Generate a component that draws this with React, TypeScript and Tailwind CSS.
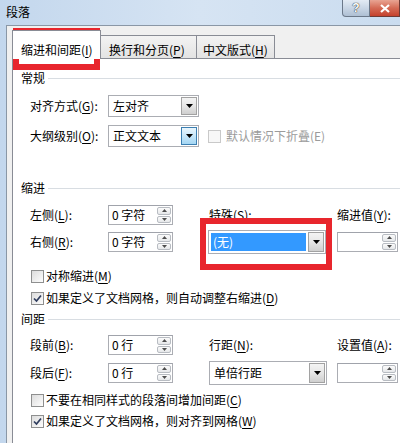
import React from "react";

const U = ({ children }: { children: React.ReactNode }) => (
  <span className="underline decoration-1 underline-offset-[2px]">{children}</span>
);

function Arrow({ up = false, small = false }: { up?: boolean; small?: boolean }) {
  if (small) {
    return (
      <svg width="5" height="3" viewBox="0 0 5 3">
        <path d={up ? "M0 3 L2.5 0 L5 3 Z" : "M0 0 L2.5 3 L5 0 Z"} fill="#4d4d4d" />
      </svg>
    );
  }
  return (
    <svg width="7" height="4" viewBox="0 0 7 4">
      <path d="M0 0 L3.5 4 L7 0 Z" fill="#000" />
    </svg>
  );
}

function Header({ title }: { title: string }) {
  return (
    <div className="h-[16px] flex items-center pl-[8px]">
      <span>{title}</span>
      <div className="flex-1 h-px bg-[#d8dde2] ml-[3px]" />
    </div>
  );
}

function Label({ children, w = "w-[78px]" }: { children: React.ReactNode; w?: string }) {
  return <div className={`${w} shrink-0 whitespace-nowrap`}>{children}</div>;
}

function Spinner({ value, w }: { value?: string; w: string }) {
  return (
    <div className={`${w} h-[20px] shrink-0 flex border border-[#abadb3] border-t-[#a0a3ab] bg-white`}>
      <div className="flex-1 flex items-center pl-[3px] whitespace-nowrap">{value}</div>
      <div className="w-[15px] flex flex-col gap-px py-px pr-px">
        <div className="flex-1 flex items-center justify-center border border-[#b8bcc2] rounded-[2px] bg-linear-to-b from-[#fbfbfb] to-[#e6e8ea]">
          <Arrow up small />
        </div>
        <div className="flex-1 flex items-center justify-center border border-[#b8bcc2] rounded-[2px] bg-linear-to-b from-[#fbfbfb] to-[#e6e8ea]">
          <Arrow small />
        </div>
      </div>
    </div>
  );
}

function Combo({
  text,
  w,
  h = "h-[22px]",
  hot = false,
  selected = false,
}: {
  text: string;
  w: string;
  h?: string;
  hot?: boolean;
  selected?: boolean;
}) {
  return (
    <div className={`${w} ${h} shrink-0 flex border border-[#abadb3] bg-white`}>
      <div className="flex-1 flex items-center p-[2px]">
        {selected ? (
          <div className="h-full w-full flex items-center bg-[#3399ff] text-white pl-[2px]">{text}</div>
        ) : (
          <div className="pl-[2px] whitespace-nowrap">{text}</div>
        )}
      </div>
      <div
        className={`w-[16px] my-px mr-px flex items-center justify-center border ${
          hot
            ? "border-[#3c7fb1] bg-linear-to-b from-[#eaf6fd] via-[#c7e7fa] to-[#a4d6f3]"
            : "border-[#a2a2a2] bg-linear-to-b from-[#f4f4f4] via-[#e6e6e6] to-[#cfcfcf]"
        }`}
      >
        <Arrow />
      </div>
    </div>
  );
}

function Check({ checked = false, disabled = false }: { checked?: boolean; disabled?: boolean }) {
  return (
    <div
      className={`w-[13px] h-[13px] shrink-0 flex items-center justify-center border ${
        disabled ? "border-[#c9c9c9] bg-[#f7f7f7]" : "border-[#8e8f8f] bg-linear-to-br from-[#dcdcdc] to-[#fdfdfd]"
      }`}
    >
      {checked && (
        <svg width="11" height="11" viewBox="0 0 11 11">
          <path d="M2 5.5 L4.5 8 L9 2.5" fill="none" stroke="#2f3d5e" strokeWidth="1.7" />
        </svg>
      )}
    </div>
  );
}

function CheckRow({ checked, children }: { checked?: boolean; children: React.ReactNode }) {
  return (
    <div className="h-[16px] flex items-center pl-[18px] gap-[2px]">
      <Check checked={checked} />
      <span className="whitespace-nowrap">{children}</span>
    </div>
  );
}

export default function App() {
  return (
    <div className="relative w-[400px] h-[443px] overflow-hidden flex flex-col bg-linear-to-r from-[#c3d7ed] via-[#d6e4f3] to-[#cadcef] text-[12px] leading-[16px] text-black font-['Noto_Sans_CJK_SC','Microsoft_YaHei',sans-serif]">
      {/* title bar */}
      <div className="h-[25px] shrink-0 flex items-start justify-between">
        <div className="pl-[6px] pt-[4px]">段落</div>
        <div className="flex">
          <div className="w-[28px] h-[17px] flex items-center justify-center border border-[#6b7889] border-t-0 rounded-bl-[4px] bg-linear-to-b from-[#e3ebf4] via-[#c9d6e5] to-[#aebfd3] text-white font-bold text-[12px] leading-none [text-shadow:0_0_1px_#222,0_0_1px_#222] font-['Liberation_Sans',sans-serif]">
            ?
          </div>
          <div className="w-[30px] h-[17px] flex items-center justify-center border border-[#6e3a35] border-t-0 border-l-0 bg-linear-to-b from-[#e8a493] via-[#d46a55] to-[#c4402c]">
            <svg width="10" height="9" viewBox="0 0 10 9">
              <path d="M1 1 L9 8 M9 1 L1 8" stroke="#fff" strokeWidth="2.2" />
            </svg>
          </div>
        </div>
      </div>

      {/* dialog body */}
      <div className="flex-1 flex pl-[6px]">
        <div className="flex-1 flex flex-col bg-[#f0f0f0] border-l border-t border-[#8a97a6] pl-[5px]">
          {/* tabs */}
          <div className="h-[32px] shrink-0 flex items-end">
            <div className="relative z-10 -mb-px w-[89px] h-[29px] bg-white border border-b-0 border-[#898c95] pl-[8px] pt-[11px] whitespace-nowrap">
              缩进和间距(<U>I</U>)
            </div>
            <div className="w-[96px] h-[23px] border-t border-r border-[#898c95] bg-linear-to-b from-[#f3f3f3] to-[#e3e3e3] pl-[8px] pt-[6px] whitespace-nowrap">
              换行和分页(<U>P</U>)
            </div>
            <div className="w-[78px] h-[23px] border-t border-r border-[#898c95] bg-linear-to-b from-[#f3f3f3] to-[#e3e3e3] pl-[6px] pt-[6px] whitespace-nowrap">
              中文版式(<U>H</U>)
            </div>
          </div>

          {/* panel */}
          <div className="flex-1 flex flex-col bg-white border-l border-t border-[#898c95] pt-[11px]">
            <Header title="常规" />

            <div className="mt-[9px] h-[22px] flex items-center pl-[17px]">
              <Label>对齐方式(<U>G</U>):</Label>
              <Combo text="左对齐" w="w-[91px]" />
            </div>

            <div className="mt-[8px] h-[22px] flex items-center pl-[17px]">
              <Label>大纲级别(<U>O</U>):</Label>
              <Combo text="正文文本" w="w-[91px]" hot />
              <div className="ml-[9px]">
                <Check disabled />
              </div>
              <span className="ml-[5px] text-[#9b9b9b] whitespace-nowrap">默认情况下折叠(E)</span>
            </div>

            <div className="mt-[33px]">
              <Header title="缩进" />
            </div>

            <div className="mt-[9px] h-[20px] flex items-center pl-[17px]">
              <Label>左侧(<U>L</U>):</Label>
              <Spinner value="0 字符" w="w-[65px]" />
              <Label w="w-[128px] ml-[36px]">特殊(<U>S</U>):</Label>
              <Label w="w-[70px]">缩进值(<U>Y</U>):</Label>
            </div>

            <div className="mt-[7px] h-[20px] flex items-center pl-[17px]">
              <Label>右侧(<U>R</U>):</Label>
              <Spinner value="0 字符" w="w-[65px]" />
              <div className="ml-[35px]">
                <Combo text="(无)" w="w-[118px]" h="h-[24px]" selected />
              </div>
              <div className="ml-[11px]">
                <Spinner w="w-[61px]" />
              </div>
            </div>

            <div className="mt-[16px]">
              <CheckRow>
                对称缩进(<U>M</U>)
              </CheckRow>
            </div>
            <div className="mt-[6px]">
              <CheckRow checked>
                如果定义了文档网格，则自动调整右缩进(<U>D</U>)
              </CheckRow>
            </div>

            <div className="mt-[5px]">
              <Header title="间距" />
            </div>

            <div className="mt-[8px] h-[20px] flex items-center pl-[17px]">
              <Label>段前(<U>B</U>):</Label>
              <Spinner value="0 行" w="w-[65px]" />
              <Label w="w-[128px] ml-[36px]">行距(<U>N</U>):</Label>
              <Label w="w-[70px]">设置值(<U>A</U>):</Label>
            </div>

            <div className="mt-[8px] h-[20px] flex items-center pl-[17px]">
              <Label>段后(<U>F</U>):</Label>
              <Spinner value="0 行" w="w-[65px]" />
              <div className="ml-[36px]">
                <Combo text="单倍行距" w="w-[118px]" h="h-[24px]" />
              </div>
              <div className="ml-[10px]">
                <Spinner w="w-[61px]" />
              </div>
            </div>

            <div className="mt-[9px]">
              <CheckRow>
                不要在相同样式的段落间增加间距(<U>C</U>)
              </CheckRow>
            </div>
            <div className="mt-[5px]">
              <CheckRow checked>
                如果定义了文档网格，则对齐到网格(<U>W</U>)
              </CheckRow>
            </div>
          </div>
        </div>
      </div>

      {/* red annotation boxes */}
      <div className="absolute left-[13px] top-[28px] w-[87px] h-[42px] border-[6px] border-[#e8262d]" />
      <div className="absolute left-[200px] top-[218px] w-[132px] h-[52px] border-[6px] border-[#e8262d]" />
    </div>
  );
}
